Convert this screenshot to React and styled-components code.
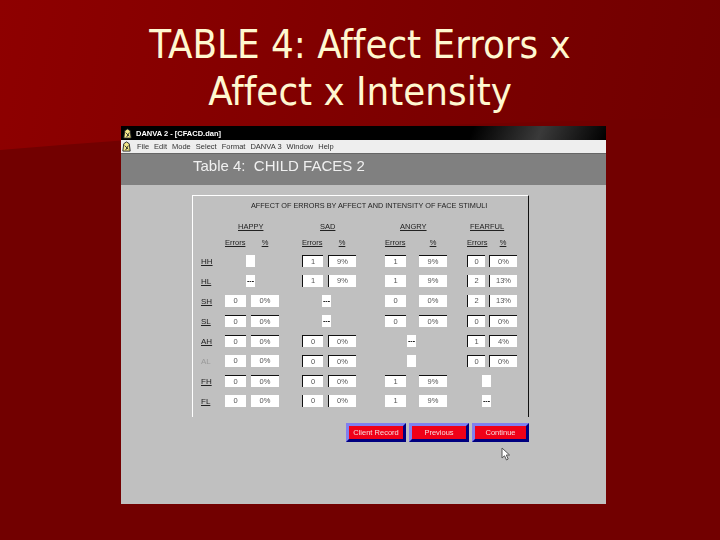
import React from "react";
import styled, { createGlobalStyle } from "styled-components";

const GlobalStyle = createGlobalStyle`
  html, body {
    margin: 0;
    padding: 0;
    background: #720000;
  }
`;

const AFFECTS = [
  { name: "HAPPY", offset: 13, first: 21, gap: 5, dash: 21 },
  { name: "SAD", offset: 18, first: 21, gap: 5, dash: 20 },
  { name: "ANGRY", offset: 15, first: 21, gap: 13, dash: 22 },
  { name: "FEARFUL", offset: 3, first: 18, gap: 4, dash: 15 },
];

// each cell: [errors, percent, sunken edge] or "---" / "" for the single box
const ROWS = [
  { label: "HH", cells: ["", ["1", "9%", "tl"], ["1", "9%", "t"], ["0", "0%", "tl"]] },
  { label: "HL", cells: ["---", ["1", "9%", "l"], ["1", "9%", ""], ["2", "13%", "l"]] },
  { label: "SH", cells: [["0", "0%", ""], "---", ["0", "0%", ""], ["2", "13%", "l"]] },
  { label: "SL", cells: [["0", "0%", "t"], "---", ["0", "0%", "t"], ["0", "0%", "tl"]] },
  { label: "AH", cells: [["0", "0%", "t"], ["0", "0%", "tl"], "---", ["1", "4%", "tl"]] },
  { label: "AL", muted: true, cells: [["0", "0%", ""], ["0", "0%", "tl"], "", ["0", "0%", "tl"]] },
  { label: "FH", cells: [["0", "0%", "t"], ["0", "0%", "tl"], ["1", "9%", "t"], ""] },
  { label: "FL", cells: [["0", "0%", ""], ["0", "0%", "l"], ["1", "9%", ""], "---"] },
];

const MENU = ["File", "Edit", "Mode", "Select", "Format", "DANVA 3", "Window", "Help"];

const AppIcon = ({ size = 11 }) => (
  <svg width={size} height={size} viewBox="0 0 12 12">
    <path d="M2 11 L3 3 L6 1 L9 3 L10 11 Z" fill="#f4e88a" stroke="#222" strokeWidth="1" />
    <path d="M4 5 L8 9 M8 5 L5 10" stroke="#222" strokeWidth="1" fill="none" />
  </svg>
);

const App = () => (
  <Slide>
    <GlobalStyle />
    <Swoosh />
    <Title>
      TABLE 4: Affect Errors x
      <br />
      Affect x Intensity
    </Title>
    <Window>
      <TitleBar>
        <AppIcon />
        <span>DANVA 2 - [CFACD.dan]</span>
      </TitleBar>
      <MenuBar>
        <AppIcon />
        {MENU.map((item) => (
          <span key={item}>{item}</span>
        ))}
      </MenuBar>
      <Banner>Table 4:&nbsp; CHILD FACES 2</Banner>
      <Content>
        <Panel>
          <PanelTitle>AFFECT OF ERRORS BY AFFECT AND INTENSITY OF FACE STIMULI</PanelTitle>
          <Row $height={16}>
            <span />
            {AFFECTS.map((a) => (
              <AffectName key={a.name} $offset={a.offset}>
                {a.name}
              </AffectName>
            ))}
          </Row>
          <Row $height={17}>
            <span />
            {AFFECTS.map((a) => (
              <Pair key={a.name} $first={a.first} $gap={a.gap}>
                <ColumnHead>Errors</ColumnHead>
                <ColumnHead $center>%</ColumnHead>
              </Pair>
            ))}
          </Row>
          {ROWS.map((row) => (
            <Row key={row.label} $height={20}>
              <RowLabel $muted={row.muted}>{row.label}</RowLabel>
              {row.cells.map((cell, i) =>
                Array.isArray(cell) ? (
                  <Pair key={i} $first={AFFECTS[i].first} $gap={AFFECTS[i].gap}>
                    <ValueBox $edge={cell[2]}>{cell[0]}</ValueBox>
                    <ValueBox $edge={cell[2]}>{cell[1]}</ValueBox>
                  </Pair>
                ) : (
                  <DashBox key={i} $offset={AFFECTS[i].dash}>
                    {cell}
                  </DashBox>
                )
              )}
            </Row>
          ))}
        </Panel>
        <Actions>
          <ActionButton $width={60}>Client Record</ActionButton>
          <ActionButton $width={60}>Previous</ActionButton>
          <ActionButton $width={57}>Continue</ActionButton>
        </Actions>
        <Cursor width="10" height="14" viewBox="0 0 10 14">
          <path d="M1 1 L1 11 L3.5 8.8 L5.5 13 L7.2 12 L5.3 8 L8.6 8 Z" fill="#fff" stroke="#555" strokeWidth="1" />
        </Cursor>
      </Content>
    </Window>
  </Slide>
);

const Slide = styled.div`
  position: relative;
  width: 720px;
  height: 540px;
  overflow: hidden;
  background: #720000;
  display: flex;
  flex-direction: column;
`;

const Swoosh = styled.div`
  position: absolute;
  inset: 0;
  background: linear-gradient(100deg, #8e0000 0%, #860000 25%, #7a0000 60%, #6e0000 100%);
  clip-path: path("M0 0 L720 0 L720 118 C 500 122, 250 128, 0 150 Z");
`;

const Title = styled.h1`
  position: relative;
  margin: 0;
  height: 126px;
  padding-top: 21px;
  box-sizing: border-box;
  text-align: center;
  font-family: "DejaVu Sans Condensed", "DejaVu Sans", sans-serif;
  font-variant-ligatures: none;
  font-size: 39.8px;
  font-weight: 400;
  line-height: 47px;
  color: #fff8d0;
`;

const Window = styled.div`
  position: relative;
  margin-left: 121px;
  width: 485px;
  height: 378px;
  display: flex;
  flex-direction: column;
  background: #c0c0c0;
  font-family: "Liberation Sans", Arial, sans-serif;
  filter: blur(0.45px);
`;

const TitleBar = styled.div`
  height: 14px;
  flex: none;
  display: flex;
  align-items: center;
  gap: 3px;
  padding-left: 1px;
  background: linear-gradient(112deg, #000 0%, #000 72%, #3a3a3a 86%, #000 100%);
  color: #fff;
  font-size: 7.5px;
  font-weight: 700;
`;

const MenuBar = styled.div`
  height: 13px;
  flex: none;
  display: flex;
  align-items: center;
  gap: 5px;
  background: #eeeeee;
  color: #333;
  font-size: 7.5px;
  border-bottom: 1px solid #666;
`;

const Banner = styled.div`
  height: 31px;
  flex: none;
  box-sizing: border-box;
  padding: 4px 0 0 72px;
  background: #808080;
  color: #f0f0f0;
  font-size: 15px;
  line-height: 16px;
`;

const Content = styled.div`
  position: relative;
  flex: 1;
  padding: 10px 0 0 71px;
`;

const Panel = styled.div`
  width: 337px;
  height: 222px;
  box-sizing: border-box;
  border-top: 1px solid #fff;
  border-left: 1px solid #fff;
  border-right: 1px solid #111;
`;

const PanelTitle = styled.div`
  height: 19px;
  margin-top: 3px;
  padding-left: 58px;
  font-size: 7.3px;
  line-height: 14px;
  color: #222;
  white-space: nowrap;
`;

const Row = styled.div`
  display: grid;
  grid-template-columns: 32px 77px 83px 82px 61px;
  align-items: center;
  height: ${(p) => p.$height}px;
`;

const AffectName = styled.span`
  margin-left: ${(p) => p.$offset}px;
  font-size: 7.5px;
  color: #222;
  text-decoration: underline;
`;

const Pair = styled.div`
  display: grid;
  grid-template-columns: ${(p) => p.$first}px 28px;
  column-gap: ${(p) => p.$gap}px;
`;

const ColumnHead = styled.span`
  font-size: 7.5px;
  color: #222;
  text-decoration: underline;
  white-space: nowrap;
  text-align: ${(p) => (p.$center ? "center" : "left")};
`;

const RowLabel = styled.span`
  padding-left: 8px;
  font-size: 8px;
  color: ${(p) => (p.$muted ? "#999" : "#222")};
  text-decoration: ${(p) => (p.$muted ? "none" : "underline")};
`;

const ValueBox = styled.span`
  height: 12px;
  box-sizing: border-box;
  background: #fff;
  color: #555;
  font-size: 7.5px;
  line-height: 11px;
  text-align: center;
  border-top: ${(p) => (p.$edge && p.$edge.includes("t") ? "1px solid #111" : "none")};
  border-left: ${(p) => (p.$edge && p.$edge.includes("l") ? "1px solid #111" : "none")};
`;

const DashBox = styled.span`
  width: 9px;
  height: 12px;
  margin-left: ${(p) => p.$offset}px;
  background: #fff;
  color: #111;
  font-size: 7px;
  font-weight: 700;
  line-height: 11px;
  text-align: center;
`;

const Actions = styled.div`
  display: flex;
  justify-content: flex-end;
  gap: 3px;
  width: 337px;
  margin-top: 6px;
`;

const ActionButton = styled.button`
  width: ${(p) => p.$width}px;
  height: 19px;
  padding: 0;
  box-sizing: border-box;
  border: 3px solid;
  border-color: #8080f0 #000080 #000080 #8080f0;
  background: #f00018;
  color: #f4dcdc;
  font-family: inherit;
  font-size: 7.5px;
  white-space: nowrap;
`;

const Cursor = styled.svg`
  position: absolute;
  left: 380px;
  top: 262px;
`;

export default App;
